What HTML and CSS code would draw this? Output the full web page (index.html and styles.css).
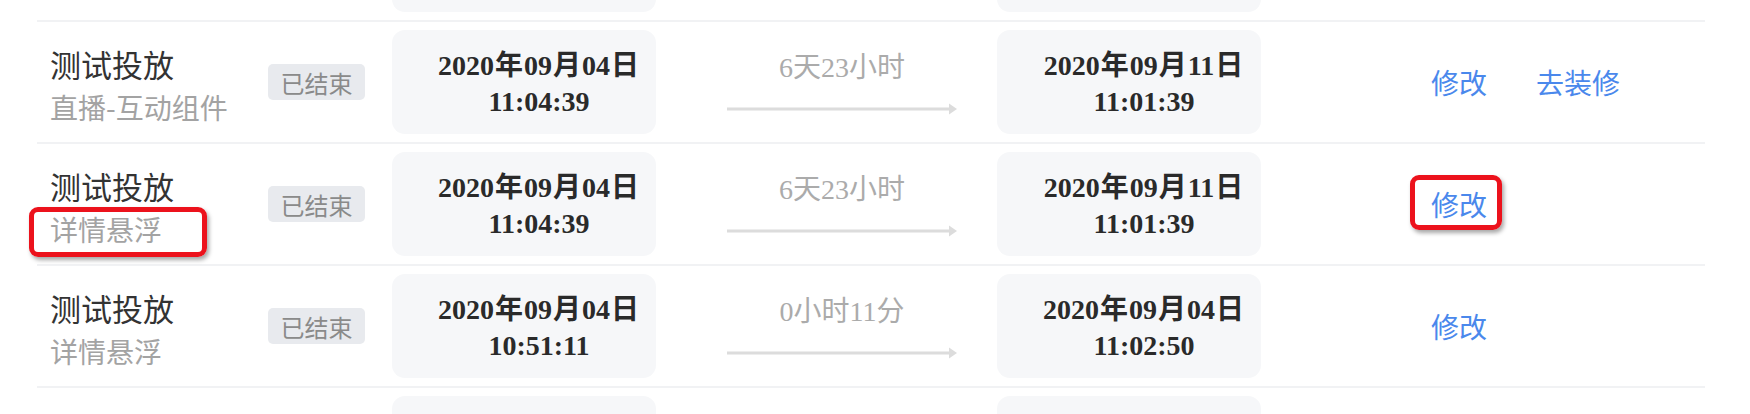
FILE: index.html
```html
<!DOCTYPE html>
<html lang="zh-CN">
<head>
<meta charset="utf-8">
<title>投放列表</title>
<link rel="stylesheet" href="styles.css">
</head>
<body>
<div class="viewport">
  <div class="list">
    <div class="row row-partial">
      <div class="name"></div>
      <div class="status"></div>
      <div class="datebox"></div>
      <div class="dur"></div>
      <div class="datebox"></div>
      <div class="actions"></div>
    </div>

    <div class="row">
      <div class="name"><span class="title">测试投放</span><span class="sub">直播-互动组件</span></div>
      <div class="status"><span class="tag">已结束</span></div>
      <div class="datebox"><span class="d">2020<span class="u">年</span>09<span class="u">月</span>04<span class="u">日</span></span><span class="t">11:04:39</span></div>
      <div class="dur"><span class="dur-text">6天23小时</span><svg class="arrow" width="230" height="12" viewBox="0 0 230 12"><line x1="0" y1="6" x2="223" y2="6" stroke="#dcdcdc" stroke-width="3"/><polygon points="222,0.5 230,6 222,11.5" fill="#dcdcdc"/></svg></div>
      <div class="datebox"><span class="d">2020<span class="u">年</span>09<span class="u">月</span>11<span class="u">日</span></span><span class="t">11:01:39</span></div>
      <div class="actions"><a class="link">修改</a><a class="link">去装修</a></div>
    </div>

    <div class="row">
      <div class="name"><span class="title">测试投放</span><span class="sub marked">详情悬浮<span class="mark mark-sub"></span></span></div>
      <div class="status"><span class="tag">已结束</span></div>
      <div class="datebox"><span class="d">2020<span class="u">年</span>09<span class="u">月</span>04<span class="u">日</span></span><span class="t">11:04:39</span></div>
      <div class="dur"><span class="dur-text">6天23小时</span><svg class="arrow" width="230" height="12" viewBox="0 0 230 12"><line x1="0" y1="6" x2="223" y2="6" stroke="#dcdcdc" stroke-width="3"/><polygon points="222,0.5 230,6 222,11.5" fill="#dcdcdc"/></svg></div>
      <div class="datebox"><span class="d">2020<span class="u">年</span>09<span class="u">月</span>11<span class="u">日</span></span><span class="t">11:01:39</span></div>
      <div class="actions"><a class="link marked">修改<span class="mark mark-link"></span></a></div>
    </div>

    <div class="row">
      <div class="name"><span class="title">测试投放</span><span class="sub">详情悬浮</span></div>
      <div class="status"><span class="tag">已结束</span></div>
      <div class="datebox"><span class="d">2020<span class="u">年</span>09<span class="u">月</span>04<span class="u">日</span></span><span class="t">10:51:11</span></div>
      <div class="dur"><span class="dur-text">0小时11分</span><svg class="arrow" width="230" height="12" viewBox="0 0 230 12"><line x1="0" y1="6" x2="223" y2="6" stroke="#dcdcdc" stroke-width="3"/><polygon points="222,0.5 230,6 222,11.5" fill="#dcdcdc"/></svg></div>
      <div class="datebox"><span class="d">2020<span class="u">年</span>09<span class="u">月</span>04<span class="u">日</span></span><span class="t">11:02:50</span></div>
      <div class="actions"><a class="link">修改</a></div>
    </div>

    <div class="row row-partial">
      <div class="name"></div>
      <div class="status"></div>
      <div class="datebox"></div>
      <div class="dur"></div>
      <div class="datebox"></div>
      <div class="actions"></div>
    </div>
  </div>
</div>
</body>
</html>
```

FILE: styles.css
```css
html, body {
  margin: 0;
  padding: 0;
  background: #ffffff;
}

body {
  font-family: "Noto Sans CJK SC", "Noto Sans", sans-serif;
  color: #333;
}

.viewport {
  width: 1750px;
  height: 414px;
  overflow: hidden;
}

.list {
  margin-top: -100px;
  margin-left: 37px;
  width: 1668px;
}

.row {
  display: grid;
  grid-template-columns: 231px 124px 264px 341px 264px 444px;
  align-items: center;
  height: 120px;
  border-bottom: 2px solid #f1f2f4;
}

.name {
  display: flex;
  flex-direction: column;
  padding-left: 13px;
  padding-top: 6px;
}

.title {
  font-size: 31px;
  line-height: 44px;
  color: #333;
  white-space: nowrap;
}

.sub {
  font-size: 28px;
  line-height: 42px;
  color: #a3a3a3;
  white-space: nowrap;
}

.status {
  display: flex;
}

.tag {
  display: inline-flex;
  align-items: center;
  justify-content: center;
  width: 97px;
  height: 36px;
  border-radius: 5px;
  background: #e8eaee;
  color: #8a8a8a;
  font-size: 24px;
}

.datebox {
  box-sizing: border-box;
  height: 104px;
  padding-left: 30px;
  padding-top: 4px;
  border-radius: 13px;
  background: #f6f7f9;
  display: flex;
  flex-direction: column;
  align-items: center;
  justify-content: center;
  font-family: "Liberation Serif", "Noto Sans CJK SC", serif;
  font-weight: bold;
  font-size: 28px;
  color: #2a2a2a;
}

.datebox .d,
.datebox .t {
  line-height: 36px;
  white-space: nowrap;
}

.datebox .u {
  padding: 0 1px;
}

.dur {
  align-self: start;
  display: flex;
  flex-direction: column;
  align-items: center;
  width: 230px;
  margin-left: 71px;
  padding-top: 26px;
}

.dur-text {
  font-family: "Liberation Serif", "Noto Sans CJK SC", serif;
  font-size: 28px;
  line-height: 40px;
  color: #ababab;
  white-space: nowrap;
}

.arrow {
  display: block;
  margin-top: 15px;
}

.actions {
  display: flex;
  align-items: center;
  gap: 49px;
  padding-left: 170px;
}

.link {
  font-size: 28px;
  line-height: 40px;
  color: #4a88ec;
  white-space: nowrap;
  cursor: pointer;
}

.marked {
  position: relative;
}

.mark {
  position: absolute;
  box-sizing: border-box;
  border: 5px solid #ec121c;
  border-radius: 9px;
  box-shadow: 2px 3px 4px rgba(0, 0, 0, 0.35);
  pointer-events: none;
}

.mark-sub {
  left: -21px;
  top: -1px;
  width: 178px;
  height: 50px;
}

.mark-link {
  left: -21px;
  top: -9px;
  width: 92px;
  height: 55px;
}
```
